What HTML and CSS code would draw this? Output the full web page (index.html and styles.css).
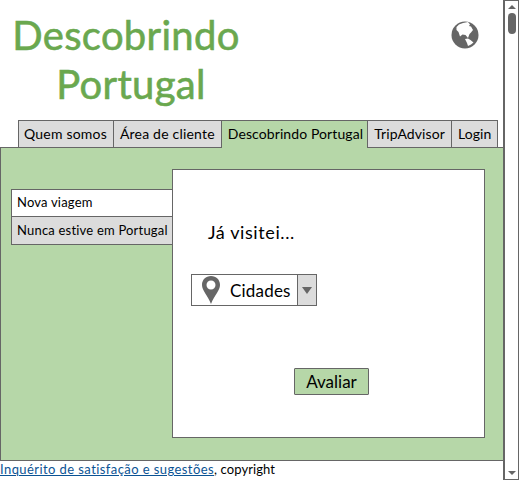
FILE: index.html
```html
<!DOCTYPE html>
<html>
<head>
    <meta name="viewport" content="width=device-width initial-scale=1.0">
    <title>Descobrindo Portugal</title>
    <link rel="stylesheet" href="styles.css">
</head>
<body>
    <div id="page">
        <div id="content">
            <header id="top">
                <h1 id="title">Descobrindo<br><span class="second_line">Portugal</span></h1>
                <svg id="globe" viewBox="0 0 28 28" width="28" height="28">
                    <circle cx="14" cy="14" r="13.5" fill="#666666"/>
                    <path d="M5.5 6 L8 3.5 L12 2 L17 1 L19 3.5 L18 5 L20 5.5 L22 9 L20 11.5 L18.5 13 L17 17 L14.5 14 L11.5 13.5 L9 15.5 L7.5 11 L5.5 9 Z" fill="#ffffff"/>
                    <path d="M14 18 L17 17.5 L19.5 19 L22.5 21.5 L20 23.5 L17 25 L16 22 Z" fill="#ffffff"/>
                </svg>
            </header>
            <nav id="tabs">
                <div class="tab">Quem somos</div>
                <div class="tab">Área de cliente</div>
                <div class="tab active">Descobrindo Portugal</div>
                <div class="tab">TripAdvisor</div>
                <div class="tab">Login</div>
            </nav>
            <div id="panel">
                <div id="sidetabs">
                    <div class="sidetab current">Nova viagem</div>
                    <div class="sidetab">Nunca estive em Portugal</div>
                </div>
                <div id="card">
                    <p id="visited">Já visitei...</p>
                    <div id="combo">
                        <svg id="pin" viewBox="0 0 18 28" width="18" height="28">
                            <path fill-rule="evenodd" d="M9 0 C3.8 0 0 3.8 0 9 C0 14.5 5.5 19 9 28 C12.5 19 18 14.5 18 9 C18 3.8 14.2 0 9 0 Z M9 4.5 C11.6 4.5 13.5 6.4 13.5 9 C13.5 11.6 11.6 13.5 9 13.5 C6.4 13.5 4.5 11.6 4.5 9 C4.5 6.4 6.4 4.5 9 4.5 Z" fill="#666666"/>
                        </svg>
                        <span id="combotext">Cidades</span>
                        <div id="comboarrow"><span class="arrow"></span></div>
                    </div>
                    <button id="rate">Avaliar</button>
                </div>
            </div>
            <footer id="foot"><a href="#">Inquérito de satisfação e sugestões</a>, copyright</footer>
        </div>
        <div id="scrollbar">
            <span class="arrow up"></span>
            <div id="thumb"></div>
            <span class="arrow down"></span>
        </div>
    </div>
</body>
</html>
```

FILE: styles.css
```css
* {
    font-family: Lato, "Liberation Sans", sans-serif;
    box-sizing: border-box;
}
html, body {
    margin: 0;
    height: 100%;
    overflow: hidden;
}
#page {
    display: flex;
    height: 480px;
}
#content {
    width: 503px;
}
#top {
    display: flex;
    justify-content: space-between;
    height: 120px;
    padding: 21px 24px 0 12px;
}
#title {
    margin: -10px 0 0;
    width: 228px;
    color: #6aa84f;
    font-size: 40px;
    font-weight: 400;
    letter-spacing: 0.3px;
    line-height: 49px;
    text-align: center;
    -webkit-text-stroke: 0.6px #6aa84f;
}
.second_line {
    padding-left: 10px;
}
#tabs {
    display: flex;
    height: 28px;
    margin: 0 0 -1px 18px;
}
.tab {
    padding: 0 6px;
    border: 1px solid #666666;
    border-left: 0;
    background-color: #dcdcdc;
    font-size: 14px;
    letter-spacing: 0.2px;
    line-height: 26px;
    white-space: nowrap;
}
.tab:first-child {
    padding-left: 5px;
    border-left: 1px solid #666666;
}
.tab.active {
    position: relative;
    z-index: 1;
    padding-right: 4px;
    border-bottom: 0;
    background-color: #b6d7a8;
}
.tab.active, .tab.active ~ .tab {
    letter-spacing: 0.1px;
}
.tab:last-child {
    padding-right: 5px;
}
#panel {
    display: flex;
    align-items: flex-start;
    height: 314px;
    padding: 21px 18px 23px 11px;
    border: 1px solid #666666;
    border-right: 0;
    background-color: #b6d7a8;
}
#sidetabs {
    width: 161px;
    margin: 20px 0 0 -1px;
}
.sidetab {
    height: 28px;
    padding-left: 5px;
    border: 1px solid #666666;
    border-top: 0;
    border-right: 0;
    background-color: #dcdcdc;
    font-size: 13px;
    letter-spacing: 0.2px;
    line-height: 26px;
    white-space: nowrap;
}
.sidetab.current {
    border-top: 1px solid #666666;
    background-color: #ffffff;
    line-height: 24px;
}
#card {
    width: 313px;
    height: 269px;
    padding: 51px 18px 0;
    border: 1px solid #666666;
    background-color: #ffffff;
}
#visited {
    margin: 0 0 31px 17px;
    font-size: 18px;
    letter-spacing: 0.6px;
    line-height: 22px;
}
#combo {
    display: flex;
    align-items: center;
    width: 126px;
    height: 32px;
    border: 1px solid #666666;
}
#pin {
    margin-left: 10px;
}
#combotext {
    flex: 1;
    margin-left: 10px;
    font-size: 17px;
    letter-spacing: 0.2px;
}
#comboarrow {
    display: flex;
    align-items: center;
    justify-content: center;
    width: 19px;
    height: 100%;
    border-left: 1px solid #666666;
    background-color: #dcdcdc;
}
.arrow {
    display: block;
    width: 0;
    height: 0;
    border-left: 5px solid transparent;
    border-right: 5px solid transparent;
    border-top: 7px solid #666666;
}
#rate {
    display: block;
    width: 75px;
    height: 27px;
    margin: 62px 0 0 103px;
    padding: 0;
    border: 1px solid #666666;
    border-radius: 1px;
    background-color: #b6d7a8;
    color: #000000;
    font-size: 17px;
}
#foot {
    padding-top: 1px;
    font-size: 13px;
    letter-spacing: 0.1px;
    line-height: 15px;
    color: #000000;
}
#foot a {
    color: #0b5394;
    letter-spacing: 0.42px;
}
#scrollbar {
    display: flex;
    flex-direction: column;
    align-items: center;
    width: 16px;
    height: 480px;
    border: 1px solid #666666;
    border-left-width: 2px;
    background-color: #ffffff;
}
.arrow.up {
    margin-top: 4px;
    border-left-width: 4px;
    border-right-width: 4px;
    border-top: 0;
    border-bottom: 4px solid #666666;
}
.arrow.down {
    margin-top: auto;
    margin-bottom: 4px;
    border-left-width: 4px;
    border-right-width: 4px;
    border-top-width: 4px;
}
#thumb {
    width: 8px;
    height: 21px;
    margin-top: 4px;
    border-radius: 4px;
    background-color: #666666;
}
```
